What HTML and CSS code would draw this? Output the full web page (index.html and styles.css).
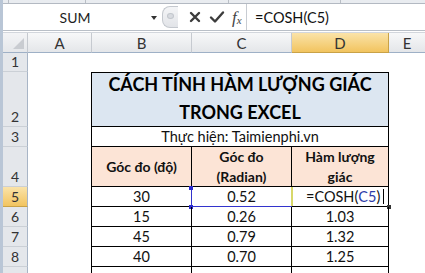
FILE: index.html
```html
<!DOCTYPE html>
<html>
<head>
<meta charset="utf-8">
<link rel="stylesheet" href="styles.css">
</head>
<body>
<div class="app">
  <div class="ribbon-edge">
    <span class="tick t1"></span><span class="tick t2"></span><span class="tick t3"></span><span class="tick t4"></span>
  </div>
  <div class="fbar">
    <div class="namebox"><span class="name">SUM</span><span class="caret"></span></div>
    <div class="tools">
      <div class="grip"><i></i></div>
      <svg class="ico" width="14" height="14" viewBox="0 0 14 14"><path d="M3 3 L11 11 M11 3 L3 11" stroke="#3c3c3c" stroke-width="2.4" stroke-linecap="round"/></svg>
      <svg class="ico" width="16" height="14" viewBox="0 0 16 14"><path d="M2 7.5 L6 11.5 L14 2.5" stroke="#3c3c3c" stroke-width="2.4" fill="none" stroke-linecap="round" stroke-linejoin="round"/></svg>
      <span class="fx">f<sub>x</sub></span>
    </div>
    <div class="formula">=COSH(C5)</div>
  </div>
  <div class="sheet">
    <div class="corner"><span class="tri"></span></div>
    <div class="ch">A</div>
    <div class="ch">B</div>
    <div class="ch">C</div>
    <div class="ch sel">D</div>
    <div class="ch last">E</div>

    <div class="rh">1</div>
    <div class="c"></div><div class="c"></div><div class="c"></div><div class="c"></div><div class="c"></div>

    <div class="rh">2</div>
    <div class="c edge"></div>
    <div class="t title">CÁCH TÍNH HÀM LƯỢNG GIÁC<br>TRONG EXCEL</div>
    <div class="c"></div>

    <div class="rh">3</div>
    <div class="c edge"></div>
    <div class="t credit">Thực hiện: Taimienphi.vn</div>
    <div class="c"></div>

    <div class="rh">4</div>
    <div class="c edge"></div>
    <div class="t head">Góc đo (độ)</div>
    <div class="t head">Góc đo<br>(Radian)</div>
    <div class="t head">Hàm lượng<br>giác</div>
    <div class="c"></div>

    <div class="rh sel">5</div>
    <div class="c edge"></div>
    <div class="t">30</div>
    <div class="t ref">0.52<span class="h hl"></span><span class="h hb"></span></div>
    <div class="t active">=COSH(<span class="blue">C5</span>)<span class="cursor"></span><span class="fill"></span></div>
    <div class="c"></div>

    <div class="rh">6</div>
    <div class="c edge"></div>
    <div class="t">15</div><div class="t">0.26</div><div class="t">1.03</div>
    <div class="c"></div>

    <div class="rh">7</div>
    <div class="c edge"></div>
    <div class="t">45</div><div class="t">0.79</div><div class="t">1.32</div>
    <div class="c"></div>

    <div class="rh">8</div>
    <div class="c edge"></div>
    <div class="t">40</div><div class="t">0.70</div><div class="t">1.25</div>
    <div class="c"></div>

    <div class="rh"></div>
    <div class="c edge"></div>
    <div class="t"></div><div class="t"></div><div class="t"></div>
    <div class="c"></div>
  </div>
</div>
</body>
</html>
```

FILE: styles.css
```css
* { box-sizing: border-box; }
html, body { margin: 0; padding: 0; }
body {
  width: 425px;
  height: 273px;
  overflow: hidden;
  background: #fff;
  font-family: Lato, "Noto Sans", sans-serif;
}
.app {
  width: 425px;
  height: 273px;
  border-left: 3px solid #b9c6d6;
  overflow: hidden;
  background: #fff;
}
.ribbon-edge {
  height: 4px;
  background: #e9ecf0;
  border-bottom: 1px solid #b3b9c2;
  display: flex;
  position: relative;
}
.tick { position: absolute; top: 0; width: 1px; height: 3px; background: #b9bec5; }
.t1 { left: 5px; } .t2 { left: 82px; } .t3 { left: 225px; } .t4 { left: 337px; }

.fbar {
  height: 27px;
  display: flex;
  align-items: stretch;
  background: #fff;
  border-bottom: 1px solid #b9bfc7;
}
.namebox {
  width: 158px;
  display: flex;
  align-items: center;
  justify-content: center;
  position: relative;
  font-size: 14px;
  color: #1e1e1e;
}
.name { margin-left: -14px; }
.caret {
  position: absolute;
  right: 4px;
  top: 12px;
  width: 0; height: 0;
  border-left: 3.5px solid transparent;
  border-right: 3.5px solid transparent;
  border-top: 4px solid #333;
}
.tools {
  width: 86px;
  display: flex;
  align-items: center;
  gap: 7px;
  border-right: 1px solid #c8ccd2;
  padding-left: 1px;
}
.grip {
  width: 16px;
  height: 22px;
  border-radius: 8px 0 0 8px;
  border: 1px solid #c4c8ce;
  border-right: none;
  background: linear-gradient(#f4f5f7, #e2e4e8);
  position: relative;
  margin-right: 3px;
}
.grip i {
  position: absolute;
  left: 4px; top: 6px;
  width: 7px; height: 6px;
  border-radius: 50%;
  background: #d8dbe0;
  border: 1px solid #c2c6cc;
}
.ico { display: block; }
.fx {
  font-family: "Liberation Serif", serif;
  font-style: italic;
  font-size: 17px;
  color: #444;
  line-height: 1;
}
.fx sub { font-size: 11px; vertical-align: -1px; }
.formula {
  flex: 1;
  display: flex;
  align-items: center;
  padding-left: 8px;
  font-size: 14.5px;
  color: #111;
}

.sheet {
  margin-top: 1px;
  display: grid;
  grid-template-columns: 25px 64px 100px 100px 97px 1fr;
  grid-template-rows: 20px 19px 55px 20px 40px 20px 20px 20px 20px 20px;
  border-top: 1px solid #d2d6dc;
}
.corner {
  background: linear-gradient(#f3f4f6, #e5e7ea);
  border-right: 1px solid #c5c9cf;
  border-bottom: 1px solid #9eb0c6;
  position: relative;
}
.tri {
  position: absolute;
  right: 3px; bottom: 3px;
  width: 0; height: 0;
  border-left: 11px solid transparent;
  border-bottom: 11px solid #c9ccd1;
}
.ch {
  background: linear-gradient(#f7f8f9, #e4e6e9);
  border-right: 1px solid #c6cad0;
  border-bottom: 1px solid #9eb0c6;
  display: flex;
  align-items: center;
  justify-content: center;
  font-size: 15px;
  color: #333;
}
.ch.sel {
  background: linear-gradient(#fae3a9, #f2c45f);
  border-right-color: #c9a247;
  border-bottom-color: #c9a247;
}
.ch.last { border-right: none; }
.rh {
  background: #e4e7eb;
  border-right: 1px solid #a8b5c6;
  border-bottom: 1px solid #cbd0d6;
  display: flex;
  align-items: flex-end;
  justify-content: center;
  padding-bottom: 1px;
  font-size: 14px;
  color: #333;
}
.rh.sel {
  background: linear-gradient(#fae3a9, #f2c45f);
  border-bottom-color: #c9a247;
}
.c { background: #fff; }
.c.edge { border-right: 1px solid #000; }
.t {
  border-right: 1px solid #000;
  border-bottom: 1px solid #000;
  display: flex;
  align-items: center;
  justify-content: center;
  text-align: center;
  font-size: 14.5px;
  color: #111;
  position: relative;
  line-height: 20px;
}
.title {
  grid-column: span 3;
  border-top: 1px solid #000;
  background: #dce6f1;
  font-weight: 700;
  font-size: 18px;
  line-height: 28px;
  align-items: flex-end;
  color: #000;
  padding-bottom: 0;
}
.credit { grid-column: span 3; }
.head {
  background: #fce4d6;
  font-weight: 700;
  font-size: 14px;
  color: #111;
}
.ref::before {
  content: "";
  position: absolute;
  left: -1px; top: -1px; right: -1px; bottom: -1px;
  border-left: 1px solid #3333cc;
  border-bottom: 1px solid #3333cc;
}
.h {
  position: absolute;
  width: 4px; height: 4px;
  background: #2b2bd0;
  left: -3px;
}
.hl { top: -1px; }
.hb { bottom: -3px; }
.blue { color: #2e3ca8; }
.active { justify-content: flex-start; padding-left: 14px; }
.active::before {
  content: "";
  position: absolute;
  left: -1px; top: 0; bottom: 0;
  width: 2px;
  background: #d8d86a;
}
.cursor {
  display: inline-block;
  width: 1px;
  height: 15px;
  background: #000;
  margin-left: 3px;
}
.fill {
  position: absolute;
  right: -3px; bottom: -3px;
  width: 4px; height: 4px;
  background: #333;
}
```
